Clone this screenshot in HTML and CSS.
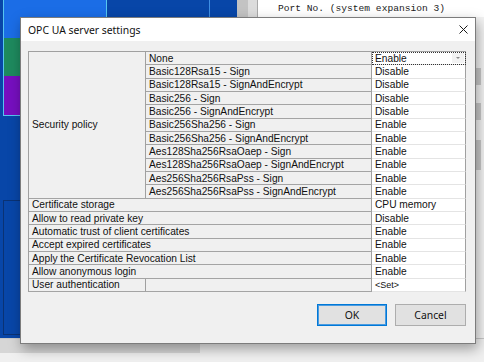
FILE: index.html
```html
<!DOCTYPE html>
<html lang="en">
<head>
    <meta charset="UTF-8">
    <meta name="viewport" content="width=device-width, initial-scale=1.0">
    <title>OPC UA server settings</title>
    <link rel="stylesheet" href="styles.css">
</head>
<body>

    <div class="desktop">
        <div class="board">
            <div class="swatches">
                <div class="swatch swatch-blue"></div>
                <div class="swatch swatch-green"></div>
                <div class="swatch swatch-purple"></div>
            </div>
            <div class="lane"></div>
            <div class="frame"></div>
        </div>
        <div class="splitter"></div>
        <div class="listing">
            <div class="listing-head">Port No. (system expansion 3)</div>
            <div class="listing-mark mark-1"></div>
            <div class="listing-mark mark-2"></div>
            <div class="listing-mark mark-3"></div>
        </div>
        <div class="status-bar">
            <div class="status-tab"></div>
        </div>
    </div>

    <div class="dialog">
        <div class="titlebar">
            <span class="title">OPC UA server settings</span>
            <svg class="close" width="9" height="9" viewBox="0 0 9 9">
                <path d="M0.5 0.5 L8.5 8.5 M8.5 0.5 L0.5 8.5" stroke="#1a1a1a" stroke-width="1" fill="none"/>
            </svg>
        </div>

        <div class="dialog-body">
            <div class="settings-grid">
                <div class="cell label policy">Security policy</div>

                <div class="cell label">None</div>
                <div class="cell value focused">Enable<span class="drop"><span class="arrow"></span></span></div>
                <div class="cell label">Basic128Rsa15 - Sign</div>
                <div class="cell value">Disable</div>
                <div class="cell label">Basic128Rsa15 - SignAndEncrypt</div>
                <div class="cell value">Disable</div>
                <div class="cell label">Basic256 - Sign</div>
                <div class="cell value">Disable</div>
                <div class="cell label">Basic256 - SignAndEncrypt</div>
                <div class="cell value">Disable</div>
                <div class="cell label">Basic256Sha256 - Sign</div>
                <div class="cell value">Enable</div>
                <div class="cell label">Basic256Sha256 - SignAndEncrypt</div>
                <div class="cell value">Enable</div>
                <div class="cell label">Aes128Sha256RsaOaep - Sign</div>
                <div class="cell value">Enable</div>
                <div class="cell label">Aes128Sha256RsaOaep - SignAndEncrypt</div>
                <div class="cell value">Enable</div>
                <div class="cell label">Aes256Sha256RsaPss - Sign</div>
                <div class="cell value">Enable</div>
                <div class="cell label">Aes256Sha256RsaPss - SignAndEncrypt</div>
                <div class="cell value">Enable</div>

                <div class="cell label wide">Certificate storage</div>
                <div class="cell value">CPU memory</div>
                <div class="cell label wide">Allow to read private key</div>
                <div class="cell value">Disable</div>
                <div class="cell label wide">Automatic trust of client certificates</div>
                <div class="cell value">Enable</div>
                <div class="cell label wide">Accept expired certificates</div>
                <div class="cell value">Enable</div>
                <div class="cell label wide">Apply the Certificate Revocation List</div>
                <div class="cell value">Enable</div>
                <div class="cell label wide">Allow anonymous login</div>
                <div class="cell value">Enable</div>
                <div class="cell label">User authentication</div>
                <div class="cell label"></div>
                <div class="cell value small">&lt;Set&gt;</div>
            </div>

            <div class="actions">
                <button class="btn btn-default">OK</button>
                <button class="btn">Cancel</button>
            </div>
        </div>
    </div>

</body>
</html>
```

FILE: styles.css
```css
* {
    box-sizing: border-box;
}

body {
    margin: 0;
    width: 484px;
    height: 362px;
    overflow: hidden;
    position: relative;
    background: #f0f0f0;
    font-family: "Liberation Sans", Arial, sans-serif;
}

/* background application window */
.desktop {
    display: grid;
    grid-template-columns: 237px 21px 1fr;
    grid-template-rows: 338px 1fr;
    height: 362px;
}

.board {
    grid-column: 1;
    grid-row: 1;
    position: relative;
    background: #0846a8;
}

.swatches {
    position: absolute;
    left: 3px;
    top: 0;
    width: 104px;
    height: 116px;
    display: flex;
    flex-direction: column;
    border: 1px solid #55c6f0;
    border-top: none;
}

.swatch-blue {
    height: 38px;
    background: #1b6de6;
}

.swatch-green {
    height: 38px;
    background: #1e8a5e;
}

.swatch-purple {
    flex: 1;
    background: #760fbf;
}

.lane {
    position: absolute;
    left: 107px;
    top: 0;
    width: 103px;
    height: 17px;
    border-right: 1px solid #3f8fe4;
}

.frame {
    position: absolute;
    left: 3px;
    top: 200px;
    width: 180px;
    height: 135px;
    border: 1px solid #0a3274;
}

.splitter {
    grid-column: 2;
    grid-row: 1;
    background: linear-gradient(to right, #c3c3c3 0 11px, #dcdcdc 11px 20px, #a9a9a9 20px);
}

.listing {
    grid-column: 3;
    grid-row: 1;
    position: relative;
    background: #f3f3f3;
}

.listing-head {
    height: 17px;
    padding: 3px 0 0 20px;
    background: #fff;
    color: #222;
    font-family: "Liberation Mono", "Courier New", monospace;
    font-size: 9.6px;
    white-space: nowrap;
}

.listing-mark {
    position: absolute;
    right: 3px;
    width: 5px;
    background: #c9c9c9;
}

.mark-1 { top: 68px; height: 17px; }
.mark-2 { top: 103px; height: 17px; }
.mark-3 { top: 140px; height: 30px; }

.status-bar {
    grid-column: 1 / 4;
    grid-row: 2;
    background: #f0f0f0;
    border-top: 1px solid #c8c8c8;
}

.status-tab {
    width: 200px;
    height: 14px;
    background: #d6d6d6;
}

/* dialog window */
.dialog {
    position: absolute;
    left: 20px;
    top: 17px;
    width: 456px;
    height: 327px;
    display: flex;
    flex-direction: column;
    background: #f0f0f0;
    border: 1px solid #7c7c7c;
    box-shadow: 2px 5px 12px rgba(0, 0, 0, 0.35);
}

.titlebar {
    height: 23px;
    display: flex;
    align-items: center;
    justify-content: space-between;
    padding: 0 7px 0 7px;
    background: #fff;
}

.title {
    font-family: "Noto Sans", "Open Sans", sans-serif;
    font-size: 10.4px;
    color: #111;
}

.dialog-body {
    padding: 10px 0 0 7px;
}

.settings-grid {
    width: 438px;
    display: grid;
    grid-template-columns: 117px 226px 94px;
    grid-template-rows: repeat(18, 13.33px);
    border-top: 1px solid #a0a0a0;
    border-left: 1px solid #a0a0a0;
    font-size: 10.2px;
    color: #111;
}

.cell {
    display: flex;
    align-items: center;
    padding-left: 3px;
    white-space: nowrap;
    border-right: 1px solid #a0a0a0;
    border-bottom: 1px solid #a4a4a4;
    overflow: hidden;
}

.label {
    background: #f0f0f0;
}

.policy {
    grid-row: 1 / span 11;
}

.wide {
    grid-column: 1 / span 2;
}

.value {
    background: #fff;
    border-bottom-color: #e4e4e4;
}

.value.small {
    font-size: 9px;
}

.focused {
    position: relative;
    outline: 1px dotted #333;
    outline-offset: -1px;
}

.drop {
    position: absolute;
    right: 1px;
    top: 1px;
    bottom: 1px;
    width: 12px;
    background: #f2f2f2;
    display: flex;
    align-items: center;
    justify-content: center;
}

.arrow {
    border-left: 2px solid transparent;
    border-right: 2px solid transparent;
    border-top: 2px solid #888;
}

.actions {
    width: 438px;
    display: flex;
    justify-content: flex-end;
    gap: 8px;
    margin-top: 12px;
}

.btn {
    width: 71px;
    height: 22px;
    padding: 0;
    background: #e1e1e1;
    border: 1px solid #adadad;
    font-family: "Noto Sans", "Open Sans", sans-serif;
    font-size: 10.4px;
    color: #111;
}

.btn-default {
    width: 70px;
    border-color: #0078d7;
    box-shadow: inset 0 0 0 1px #4a9be0;
}
```
